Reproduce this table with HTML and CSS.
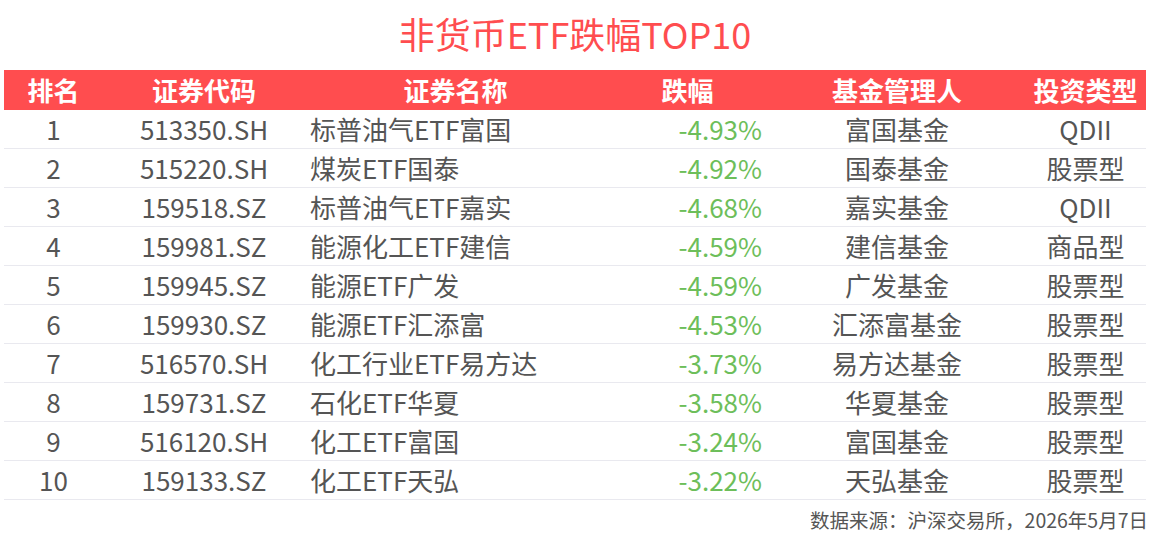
FILE: index.html
```html
<!DOCTYPE html>
<html lang="zh-CN">
<head>
<meta charset="utf-8">
<title>非货币ETF跌幅TOP10</title>
<link rel="stylesheet" href="styles.css">
</head>
<body>
<div class="page">
  <h1 class="title">非货币ETF跌幅TOP10</h1>
  <table class="rank-table">
    <colgroup>
      <col class="c-rank"><col class="c-code"><col class="c-name"><col class="c-chg"><col class="c-mgr"><col class="c-type">
    </colgroup>
    <thead>
      <tr><th>排名</th><th>证券代码</th><th>证券名称</th><th>跌幅</th><th>基金管理人</th><th>投资类型</th></tr>
    </thead>
    <tbody>
      <tr><td>1</td><td>513350.SH</td><td class="name">标普油气ETF富国</td><td class="chg">-4.93%</td><td>富国基金</td><td>QDII</td></tr>
      <tr><td>2</td><td>515220.SH</td><td class="name">煤炭ETF国泰</td><td class="chg">-4.92%</td><td>国泰基金</td><td>股票型</td></tr>
      <tr><td>3</td><td>159518.SZ</td><td class="name">标普油气ETF嘉实</td><td class="chg">-4.68%</td><td>嘉实基金</td><td>QDII</td></tr>
      <tr><td>4</td><td>159981.SZ</td><td class="name">能源化工ETF建信</td><td class="chg">-4.59%</td><td>建信基金</td><td>商品型</td></tr>
      <tr><td>5</td><td>159945.SZ</td><td class="name">能源ETF广发</td><td class="chg">-4.59%</td><td>广发基金</td><td>股票型</td></tr>
      <tr><td>6</td><td>159930.SZ</td><td class="name">能源ETF汇添富</td><td class="chg">-4.53%</td><td>汇添富基金</td><td>股票型</td></tr>
      <tr><td>7</td><td>516570.SH</td><td class="name">化工行业ETF易方达</td><td class="chg">-3.73%</td><td>易方达基金</td><td>股票型</td></tr>
      <tr><td>8</td><td>159731.SZ</td><td class="name">石化ETF华夏</td><td class="chg">-3.58%</td><td>华夏基金</td><td>股票型</td></tr>
      <tr><td>9</td><td>516120.SH</td><td class="name">化工ETF富国</td><td class="chg">-3.24%</td><td>富国基金</td><td>股票型</td></tr>
      <tr><td>10</td><td>159133.SZ</td><td class="name">化工ETF天弘</td><td class="chg">-3.22%</td><td>天弘基金</td><td>股票型</td></tr>
    </tbody>
  </table>
  <div class="source">数据来源：沪深交易所，2026年5月7日</div>
</div>
</body>
</html>
```

FILE: styles.css
```css
html, body {
  margin: 0;
  padding: 0;
  background: #ffffff;
}

body {
  font-family: "Noto Sans CJK SC", "Noto Sans", sans-serif;
  color: #555555;
}

.page {
  width: 1150px;
  padding: 0 4px;
  box-sizing: border-box;
}

.title {
  margin: 0 0 4px 0;
  height: 66px;
  line-height: 66px;
  font-size: 36px;
  font-weight: 400;
  color: #ff4d4f;
  text-align: center;
}

.rank-table {
  width: 1142px;
  border-collapse: collapse;
  table-layout: fixed;
}

.c-rank { width: 99px; }
.c-code { width: 202px; }
.c-name { width: 301px; }
.c-chg  { width: 163px; }
.c-mgr  { width: 256px; }
.c-type { width: 121px; }

.rank-table th {
  background: #ff4d4f;
  color: #ffffff;
  font-size: 26px;
  font-weight: 700;
  height: 40px;
  line-height: 40px;
  padding: 0;
  text-align: center;
  white-space: nowrap;
}

.rank-table td {
  font-size: 26px;
  font-weight: 400;
  color: #555555;
  height: 38px;
  line-height: 38px;
  padding: 0;
  text-align: center;
  border-bottom: 1px solid #e9e9ef;
  white-space: nowrap;
}

.rank-table td.name {
  text-align: left;
  padding-left: 5px;
}

.rank-table td.chg {
  text-align: right;
  padding-right: 7px;
  color: #6dbe5a;
}

.source {
  height: 39px;
  line-height: 39px;
  font-size: 19.5px;
  color: #555555;
  text-align: right;
  margin-right: -2px;
}
```
